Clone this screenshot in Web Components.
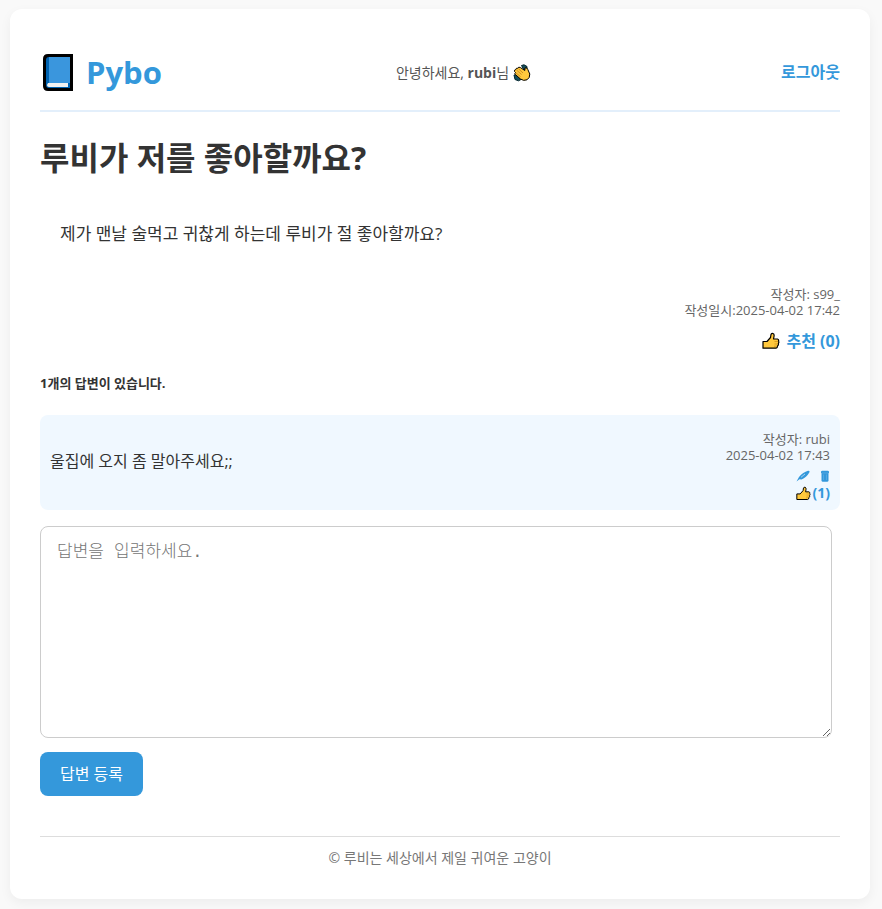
<!DOCTYPE html>
<html lang="ko">
<head>
<meta charset="UTF-8">
<meta name="viewport" content="width=device-width, initial-scale=1.0">
<title>Pybo</title>
<style>
    body {
        margin: 0;
        padding: 9px 12px 11px 10px;
        background: #f9f9f9;
        color: #333;
        font-family: "Open Sans", "Noto Sans CJK KR", sans-serif;
        font-size: 16px;
    }
</style>
</head>
<body>
<pybo-page>
    <pybo-header slot="header" user="rubi"></pybo-header>
    <question-detail author="s99_" date="2025-04-02 17:42" votes="0">
        <span slot="subject">루비가 저를 좋아할까요?</span>
        제가 맨날 술먹고 귀찮게 하는데 루비가 절 좋아할까요?
    </question-detail>
    <answer-list count="1">
        <answer-item author="rubi" date="2025-04-02 17:43" votes="1">울집에 오지 좀 말아주세요;;</answer-item>
    </answer-list>
    <answer-form></answer-form>
    <pybo-footer slot="footer">© 루비는 세상에서 제일 귀여운 고양이</pybo-footer>
</pybo-page>

<script>
const icons = {
    book: `
        <svg viewBox="0 0 30 38" width="30" height="38" aria-hidden="true">
            <path d="M5 0H30V37H5Q0 37 0 32V5Q0 0 5 0Z" fill="#000"/>
            <path d="M6 3H27V34H6Q3 34 3 31V6Q3 3 6 3Z" fill="#0063b1"/>
            <path d="M6 3H27V29H6Z" fill="#3a96dd"/>
            <path d="M5 29H25V33H6Q4 33 4 31Z" fill="#f2f2f2"/>
            <path d="M25 29H27V34H25Z" fill="#0063b1"/>
        </svg>`,
    clap: `
        <svg viewBox="0 0 18 18" width="18" height="18" aria-hidden="true">
            <path d="M8.500 1.500L11 .8L14 2.500V5L11 6ZM1 11L4.500 10.500L8 15.500L5.500 16.800L2 15.500Z" fill="#14505c" stroke="#00232b" stroke-linejoin="round"/>
            <path d="M1.500 7.500Q1 5.800 2.800 5.500Q3 3.800 4.800 4.200Q5.500 2.500 7.300 3.500L11.800 6.500L12 3.800Q13.800 3.200 14.800 5.500L16.800 10Q17 14 14 15.800Q10.500 17.300 7.500 15L2.300 10.500Q1.200 9.300 2.500 8.500Z" fill="#ffc83d" stroke="#000" stroke-linejoin="round"/>
            <path d="M3.500 6L8.500 10.500M5.500 4.800L10 9M3 9L7.500 12.500" fill="none" stroke="#b87717" stroke-width=".7"/>
        </svg>`,
    thumb: `
        <svg viewBox="0 0 18 18" width="100%" height="100%" aria-hidden="true">
            <path d="M1 9.500H5L8.500 5.500L9 2.500Q9.500 1 11 1.500Q12.500 2 12 4.500L11.500 7H15.500Q17 7.500 16.500 9Q17.300 10 16.300 11.500Q16.800 13 15.500 14Q15.500 16 14 16.200H1Z" fill="#ffc83d" stroke="#000" stroke-width="1.200" stroke-linejoin="round"/>
            <path d="M12.500 9.500H16M12.500 12H15.500M12 14.200H14.500" stroke="#c98a16" stroke-width=".7"/>
        </svg>`,
    pen: `
        <svg viewBox="0 0 14 12" width="14" height="12" aria-hidden="true">
            <path d="M.5 11.500L3 7Q7 2 12 .7Q14.200 .5 13.300 2.500Q10.500 7.500 5.500 9.500L3.500 9.300Z" fill="#3498db"/>
            <path d="M5 7.300L9 4" stroke="#a5d3f1"/>
        </svg>`,
    trash: `
        <svg viewBox="0 0 10 12" width="10" height="12" aria-hidden="true">
            <path d="M1 1.500L2 .7H8L9 1.500V3H1ZM1.500 3H8.500V11L7.500 11.700H2.500L1.500 11Z" fill="#3498db"/>
            <path d="M1.500 3H8.500M3.500 4.500V10M6.500 4.500V10" stroke="#6bb4e5" stroke-width=".6"/>
        </svg>`
};

class PyboPage extends HTMLElement {
    constructor() {
        super();
        this.attachShadow({ mode: 'open' });
    }

    connectedCallback() {
        this.shadowRoot.innerHTML = `
            <style>
                :host {
                    display: block;
                    max-width: 860px;
                    box-sizing: border-box;
                    padding: 30px;
                    background: #fff;
                    border-radius: 12px;
                    box-shadow: 0 4px 12px rgba(0, 0, 0, 0.05);
                }
                main {
                    display: block;
                }
            </style>
            <slot name="header"></slot>
            <main><slot></slot></main>
            <slot name="footer"></slot>
        `;
    }
}

class PyboHeader extends HTMLElement {
    constructor() {
        super();
        this.attachShadow({ mode: 'open' });
    }

    connectedCallback() {
        const user = this.getAttribute('user') || '';

        this.shadowRoot.innerHTML = `
            <style>
                header {
                    display: flex;
                    justify-content: space-between;
                    align-items: center;
                    padding: 11px 0 15px;
                    border-bottom: 2px solid #e3effb;
                    line-height: 45px;
                }
                a {
                    color: #3498db;
                    font-weight: bold;
                    text-decoration: none;
                }
                .logo {
                    display: flex;
                    align-items: center;
                    gap: 13px;
                    padding-left: 3px;
                    font-size: 31px;
                }
                .hello {
                    display: flex;
                    align-items: center;
                    gap: 4px;
                    margin-right: 16px;
                    font-size: 14px;
                    color: #555;
                }
            </style>
            <header>
                <a class="logo" href="#">${icons.book}<span>Pybo</span></a>
                <div class="hello"><span>안녕하세요, <strong>${user}</strong>님</span>${icons.clap}</div>
                <a href="#">로그아웃</a>
            </header>
        `;
    }
}

class QuestionDetail extends HTMLElement {
    constructor() {
        super();
        this.attachShadow({ mode: 'open' });
    }

    connectedCallback() {
        const author = this.getAttribute('author') || '';
        const date = this.getAttribute('date') || '';
        const votes = this.getAttribute('votes') || '0';

        this.shadowRoot.innerHTML = `
            <style>
                :host {
                    display: block;
                }
                h1 {
                    margin: 24px 0 28px;
                    font-size: 32px;
                    line-height: 44px;
                }
                .content {
                    padding: 12px 20px;
                    font-size: 17px;
                    line-height: 28px;
                }
                .meta {
                    margin-top: 26px;
                    font-size: 13px;
                    line-height: 16px;
                    text-align: right;
                    color: #666;
                }
                .vote {
                    display: flex;
                    justify-content: flex-end;
                    margin-top: 11px;
                    line-height: 24px;
                }
                a {
                    display: flex;
                    align-items: center;
                    gap: 6px;
                    color: #3498db;
                    font-weight: bold;
                    text-decoration: none;
                }
                .thumb {
                    width: 18px;
                    height: 18px;
                    line-height: 0;
                }
            </style>
            <h1><slot name="subject"></slot></h1>
            <div class="content"><slot></slot></div>
            <div class="meta">
                <div>작성자: ${author}</div>
                <div>작성일시:${date}</div>
            </div>
            <div class="vote"><a href="#"><span class="thumb">${icons.thumb}</span><span>추천 (${votes})</span></a></div>
        `;
    }
}

class AnswerList extends HTMLElement {
    constructor() {
        super();
        this.attachShadow({ mode: 'open' });
    }

    connectedCallback() {
        const count = this.getAttribute('count') || '0';

        this.shadowRoot.innerHTML = `
            <style>
                :host {
                    display: block;
                }
                h5 {
                    margin: 20px 0 22px;
                    font-size: 13px;
                    line-height: 20px;
                }
            </style>
            <h5>${count}개의 답변이 있습니다.</h5>
            <slot></slot>
        `;
    }
}

class AnswerItem extends HTMLElement {
    constructor() {
        super();
        this.attachShadow({ mode: 'open' });
    }

    connectedCallback() {
        const author = this.getAttribute('author') || '';
        const date = this.getAttribute('date') || '';
        const votes = this.getAttribute('votes') || '0';

        this.shadowRoot.innerHTML = `
            <style>
                :host {
                    display: flex;
                    justify-content: space-between;
                    align-items: center;
                    padding: 8px 10px;
                    background: #f0f8ff;
                    border-radius: 8px;
                }
                .content {
                    line-height: 24px;
                    padding-bottom: 4px;
                }
                .meta {
                    padding-top: 8px;
                    font-size: 13px;
                    line-height: 16px;
                    text-align: right;
                    color: #666;
                }
                .tools {
                    display: flex;
                    justify-content: flex-end;
                    align-items: center;
                }
                .edit {
                    gap: 10px;
                    margin-top: 7px;
                    line-height: 14px;
                }
                a {
                    display: flex;
                    align-items: center;
                    color: #3498db;
                    font-weight: bold;
                    text-decoration: none;
                }
                .vote {
                    margin-top: 2px;
                    font-size: 14px;
                    line-height: 18px;
                }
                .vote a {
                    gap: 2px;
                }
                .thumb {
                    width: 15px;
                    height: 15px;
                    line-height: 0;
                }
            </style>
            <div class="content"><slot></slot></div>
            <div class="meta">
                <div>작성자: ${author}</div>
                <div>${date}</div>
                <div class="tools edit">
                    <a href="#" aria-label="수정">${icons.pen}</a>
                    <a href="#" aria-label="삭제">${icons.trash}</a>
                </div>
                <div class="tools vote"><a href="#"><span class="thumb">${icons.thumb}</span><span>(${votes})</span></a></div>
            </div>
        `;
    }
}

class AnswerForm extends HTMLElement {
    constructor() {
        super();
        this.attachShadow({ mode: 'open' });
    }

    connectedCallback() {
        this.shadowRoot.innerHTML = `
            <style>
                :host {
                    display: block;
                    margin-top: 16px;
                }
                form {
                    display: flex;
                    flex-direction: column;
                    align-items: flex-start;
                    gap: 14px;
                }
                textarea {
                    width: 99%;
                    height: 212px;
                    box-sizing: border-box;
                    padding: 14px 16px;
                    border: 1px solid #ccc;
                    border-radius: 8px;
                    font-family: "Liberation Mono", "Noto Sans CJK KR", monospace;
                    font-size: 17px;
                    font-weight: 300;
                    line-height: 24px;
                }
                textarea::placeholder {
                    color: #757575;
                }
                button {
                    padding: 10px 20px;
                    border: 0;
                    border-radius: 8px;
                    background: #3498db;
                    color: #fff;
                    font-family: inherit;
                    font-size: 16px;
                    line-height: 24px;
                    cursor: pointer;
                }
            </style>
            <form>
                <textarea name="content" aria-label="답변" placeholder="답변을 입력하세요."></textarea>
                <button type="submit">답변 등록</button>
            </form>
        `;
    }
}

class PyboFooter extends HTMLElement {
    constructor() {
        super();
        this.attachShadow({ mode: 'open' });
    }

    connectedCallback() {
        this.shadowRoot.innerHTML = `
            <style>
                :host {
                    display: block;
                    margin-top: 40px;
                    padding-top: 10px;
                    border-top: 1px solid #ddd;
                    font-size: 14px;
                    line-height: 22px;
                    text-align: center;
                    color: #777;
                }
            </style>
            <footer><slot></slot></footer>
        `;
    }
}

customElements.define('pybo-page', PyboPage);
customElements.define('pybo-header', PyboHeader);
customElements.define('question-detail', QuestionDetail);
customElements.define('answer-list', AnswerList);
customElements.define('answer-item', AnswerItem);
customElements.define('answer-form', AnswerForm);
customElements.define('pybo-footer', PyboFooter);
</script>
</body>
</html>
